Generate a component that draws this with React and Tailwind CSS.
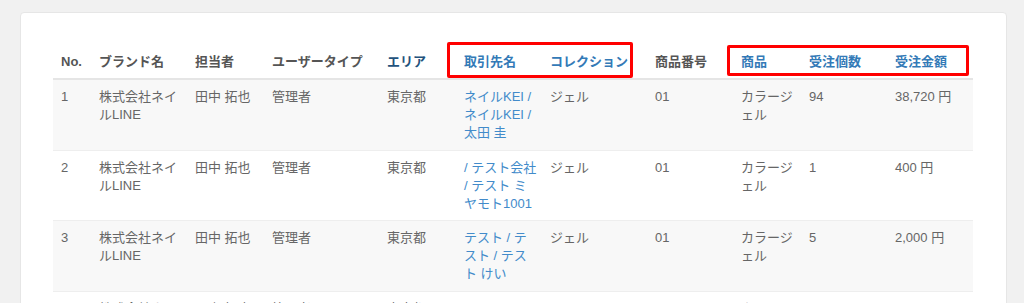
const columns = [
  { label: 'No.', width: 38, tone: 'gray' },
  { label: 'ブランド名', width: 96, tone: 'gray' },
  { label: '担当者', width: 77, tone: 'gray' },
  { label: 'ユーザータイプ', width: 115, tone: 'gray' },
  { label: 'エリア', width: 77, tone: 'navy' },
  { label: '取引先名', width: 86, tone: 'blue' },
  { label: 'コレクション', width: 105, tone: 'blue' },
  { label: '商品番号', width: 86, tone: 'gray' },
  { label: '商品', width: 68, tone: 'blue' },
  { label: '受注個数', width: 86, tone: 'blue' },
  { label: '受注金額', width: 86, tone: 'blue' },
]

const toneClass = {
  gray: 'text-[#555]',
  navy: 'text-[#23527c]',
  blue: 'text-[#337ab7]',
}

const rows = [
  { no: '1', client: ['ネイルKEI /', 'ネイルKEI /', '太田 圭'], qty: '94', amount: '38,720 円' },
  { no: '2', client: ['/ テスト会社', '/ テスト ミ', 'ヤモト1001'], qty: '1', amount: '400 円' },
  { no: '3', client: ['テスト / テ', 'スト / テス', 'ト けい'], qty: '5', amount: '2,000 円' },
  { no: '4', client: ['テスト / テ', 'スト / テス', 'ト けい'], qty: '3', amount: '1,200 円' },
]

const Lines = ({ lines }) => lines.map((l, i) => <div key={i}>{l}</div>)

const cell = 'align-top px-[8px] pt-[8px] pb-[7.5px] border-t border-[#eee]'

export default function App() {
  return (
    <div className="min-h-screen bg-[#f1f1f1] pt-[12px] pl-[20px] overflow-hidden font-['Liberation_Sans','Noto_Sans_CJK_JP',sans-serif] text-[13px] leading-[18px]">
      <div className="relative w-[987px] bg-white border border-[#e6e6e6] rounded-[4px] px-[32px] pt-[32px] pb-[40px]">
        <table className="table-fixed border-collapse w-[920px]">
          <colgroup>
            {columns.map((c) => (
              <col key={c.label} style={{ width: c.width }} />
            ))}
          </colgroup>
          <thead>
            <tr>
              {columns.map((c) => (
                <th
                  key={c.label}
                  className={`text-left font-bold px-[8px] pt-[8px] pb-[7px] border-b-2 border-[#e5e5e5] whitespace-nowrap ${toneClass[c.tone]}`}
                >
                  {c.label}
                </th>
              ))}
            </tr>
          </thead>
          <tbody className="text-[#666]">
            {rows.map((r, i) => (
              <tr key={r.no} className={i % 2 === 0 ? 'bg-[#f8f8f8]' : 'bg-white'}>
                <td className={cell}>{r.no}</td>
                <td className={cell}>
                  <Lines lines={['株式会社ネイ', 'ルLINE']} />
                </td>
                <td className={`${cell} whitespace-nowrap`}>田中 拓也</td>
                <td className={cell}>管理者</td>
                <td className={cell}>東京都</td>
                <td className={`${cell} text-[#428bca] whitespace-nowrap`}>
                  <Lines lines={r.client} />
                </td>
                <td className={cell}>ジェル</td>
                <td className={cell}>01</td>
                <td className={`${cell} whitespace-nowrap`}>
                  <Lines lines={['カラージ', 'ェル']} />
                </td>
                <td className={cell}>{r.qty}</td>
                <td className={`${cell} whitespace-nowrap`}>{r.amount}</td>
              </tr>
            ))}
          </tbody>
        </table>

        {/* highlight boxes */}
        <div className="absolute left-[426px] top-[29px] w-[186px] h-[36px] border-[3px] border-[#ff0000] rounded-[2px]" />
        <div className="absolute left-[706px] top-[32px] w-[242px] h-[31px] border-[3px] border-[#ff0000] rounded-[2px]" />
      </div>
    </div>
  )
}
